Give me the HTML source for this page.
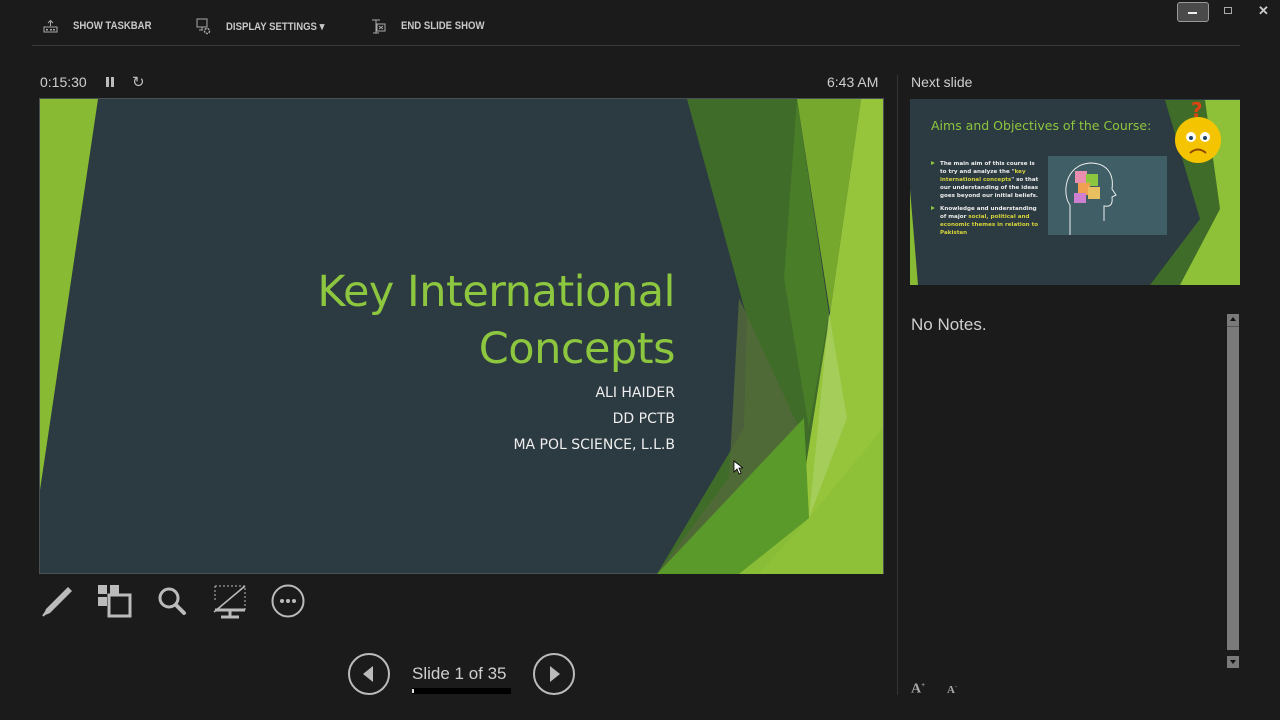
<!DOCTYPE html>
<html><head><style>
body{margin:0;width:1280px;height:720px;background:#1b1b1b;overflow:hidden;font-family:"Liberation Sans",sans-serif;position:relative;color:#ccc}
.a{position:absolute}
.tb{font-size:11px;font-weight:bold;color:#c8c8c8;top:20px;transform:scaleX(.87);transform-origin:left;white-space:nowrap}
</style></head><body>
<!-- top bar -->
<svg class="a" style="left:43px;top:19px" width="16" height="16" viewBox="0 0 16 16"><rect x="1" y="8" width="13" height="5" fill="none" stroke="#aaa"/><path d="M7.5 2v5M5 4l2.5-2.5L10 4" stroke="#aaa" fill="none"/><rect x="3" y="10" width="2" height="1.5" fill="#aaa"/><rect x="7" y="10" width="2" height="1.5" fill="#aaa"/><rect x="10" y="10" width="2" height="1.5" fill="#aaa"/></svg>
<div class="a tb" style="left:73px">SHOW TASKBAR</div>
<svg class="a" style="left:196px;top:18px" width="16" height="18" viewBox="0 0 16 18"><rect x="1" y="1" width="10" height="8" fill="none" stroke="#aaa"/><path d="M6 9v3M3 12h4" stroke="#aaa"/><circle cx="11" cy="13" r="2.5" fill="none" stroke="#aaa" stroke-width="1.5" stroke-dasharray="2 1"/></svg>
<div class="a tb" style="left:226px">DISPLAY SETTINGS ▾</div>
<svg class="a" style="left:371px;top:18px" width="16" height="18" viewBox="0 0 16 18"><path d="M1 2h8M5 2v13M2 15h6" stroke="#aaa" fill="none"/><rect x="6" y="6" width="8" height="7" fill="#1b1b1b" stroke="#aaa"/><path d="M8 8l4 3M12 8l-4 3" stroke="#aaa"/></svg>
<div class="a tb" style="left:401px">END SLIDE SHOW</div>
<div class="a" style="left:32px;top:45px;width:1208px;height:1px;background:#3a3a3a"></div>
<div class="a" style="left:1177px;top:2px;width:30px;height:18px;border:1px solid #999;border-radius:3px;background:#4a4a4a"></div>
<div class="a" style="left:1188px;top:12px;width:9px;height:1.5px;background:#eee"></div>
<div class="a" style="left:1224px;top:7px;width:6px;height:5px;border:1px solid #aaa"></div>
<div class="a" style="left:1258px;top:3px;font-size:13px;color:#ccc;font-weight:bold">✕</div>

<div class="a" style="left:40px;top:74px;font-size:14px;color:#cfcfcf">0:15:30</div>
<div class="a" style="left:106px;top:77px;width:3px;height:10px;background:#bbb;box-shadow:5px 0 0 #bbb"></div>
<div class="a" style="left:132px;top:73px;font-size:15px;color:#bbb">↻</div>
<div class="a" style="left:827px;top:74px;font-size:14px;color:#cfcfcf">6:43 AM</div>

<!-- slide -->
<svg class="a" style="left:39px;top:98px" width="845" height="476" viewBox="0 0 845 476">
<rect x="0" y="0" width="845" height="476" fill="#2c3a41" stroke="#666"/>
<polygon points="1,1 59,1 1,392" fill="#88bb33"/>
<polygon points="648,1 758,1 790,220 770,420 700,476 618,476 705,330 708,220" fill="#3f6c28"/>
<polygon points="700,200 760,330 740,476 618,476 690,380" fill="#546a3a" opacity=".8"/>
<polygon points="758,1 822,1 791,215" fill="#77a82e"/>
<polygon points="758,1 790,215 770,330 745,180" fill="#4a7d28"/>
<polygon points="822,1 844,1 844,476 720,476 765,380 791,215" fill="#96c43a"/>
<polygon points="790,215 808,320 770,420" fill="#a8cf62" opacity=".8"/>
<polygon points="618,476 765,320 770,420 720,476" fill="#5a9a2a"/>
<polygon points="700,476 770,420 844,330 844,476" fill="#8ec138" opacity=".9"/>
</svg>
<div class="a" style="left:200px;top:264px;width:475px;text-align:right;font-family:'DejaVu Sans',sans-serif;font-size:43px;line-height:57px;color:#8dc63f;letter-spacing:-0.5px">Key International<br>Concepts</div>
<div class="a" style="left:400px;top:380px;width:275px;text-align:right;font-family:'DejaVu Sans',sans-serif;font-size:14px;line-height:26px;color:#eee">ALI HAIDER<br>DD PCTB<br>MA POL SCIENCE, L.L.B</div>
<svg class="a" style="left:733px;top:460px" width="10" height="15"><path d="M1 1v11l3-3 2 5 2-1-2-5h4z" fill="#fff" stroke="#000" stroke-width=".8"/></svg>

<!-- tools -->
<svg class="a" style="left:40px;top:584px" width="280" height="36" viewBox="0 0 280 36">
<path d="M3 32l3-7L28 3l4 4L10 29z" fill="#bbb"/><path d="M3 32l3-4" stroke="#bbb" stroke-width="2"/>
<rect x="58" y="1" width="9" height="9" fill="#bbb"/><rect x="70" y="1" width="9" height="9" fill="#bbb"/><rect x="58" y="13" width="9" height="9" fill="#bbb"/><rect x="69" y="11" width="21" height="21" fill="none" stroke="#bbb" stroke-width="3"/>
<circle cx="129" cy="14" r="9" fill="none" stroke="#bbb" stroke-width="3"/><path d="M136 21l8 8" stroke="#bbb" stroke-width="4" stroke-linecap="round"/>
<path d="M175 2h30v24M175 2v16" stroke="#bbb" stroke-dasharray="2 2" fill="none"/><path d="M174 28L205 2" stroke="#bbb" stroke-width="1.5"/><path d="M175 26h30M190 26v6M181 33h18" stroke="#bbb" stroke-width="3"/>
<circle cx="248" cy="17" r="15.5" fill="none" stroke="#bbb" stroke-width="2"/><circle cx="242" cy="17" r="2" fill="#bbb"/><circle cx="248" cy="17" r="2" fill="#bbb"/><circle cx="254" cy="17" r="2" fill="#bbb"/>
</svg>
<svg class="a" style="left:347px;top:653px" width="230" height="44" viewBox="0 0 230 44">
<circle cx="22" cy="21" r="20" fill="none" stroke="#bbb" stroke-width="2"/><path d="M26 13v16l-10-8z" fill="#bbb"/>
<circle cx="207" cy="21" r="20" fill="none" stroke="#bbb" stroke-width="2"/><path d="M203 13v16l10-8z" fill="#bbb"/>
</svg>
<div class="a" style="left:412px;top:664px;font-size:17px;color:#cfcfcf">Slide 1 of 35</div>
<div class="a" style="left:412px;top:688px;width:99px;height:6px;background:#000"></div>
<div class="a" style="left:412px;top:689px;width:2px;height:4px;background:#ddd"></div>

<!-- right panel -->
<div class="a" style="left:897px;top:75px;width:1px;height:620px;background:#333"></div>
<div class="a" style="left:911px;top:74px;font-size:14px;color:#cfcfcf">Next slide</div>
<svg class="a" style="left:910px;top:99px" width="330" height="186" viewBox="0 0 330 186">
<rect width="330" height="186" fill="#2c3a41"/>
<polygon points="0,90 8,186 0,186" fill="#88bb33"/>
<polygon points="255,1 330,1 330,186 240,186 290,120" fill="#3f6c28"/>
<polygon points="295,1 330,1 330,186 270,186 310,110" fill="#8ec138"/>
<text x="21" y="31" font-family="DejaVu Sans" font-size="12.5" fill="#8dc63f">Aims and Objectives of the Course:</text>
<g font-family="DejaVu Sans" font-size="5.6" fill="#eee" font-weight="bold">
<text x="30" y="66">The main aim of this course is</text><text x="30" y="74">to try and analyze the "<tspan fill="#d6d43a">key</tspan></text><text x="30" y="82" fill="#d6d43a">international concepts<tspan fill="#eee">" so that</tspan></text><text x="30" y="90">our understanding of the ideas</text><text x="30" y="98">goes beyond our initial beliefs.</text>
<text x="30" y="111">Knowledge and understanding</text><text x="30" y="119">of major <tspan fill="#d6d43a">social, political and</tspan></text><text x="30" y="127" fill="#d6d43a">economic themes in relation to</text><text x="30" y="135" fill="#d6d43a">Pakistan</text></g>
<path d="M21 62l4 2-4 2zM21 107l4 2-4 2z" fill="#8dc63f"/>
<rect x="138" y="57" width="119" height="79" fill="#3f5e66"/>
<path d="M160 136v-30c-8-10-6-40 20-42c18 0 24 12 22 26l4 6-4 2c1 8-2 10-8 9v15" fill="none" stroke="#eee" stroke-width="1"/>
<rect x="165" y="72" width="12" height="12" fill="#e88fb0"/><rect x="176" y="75" width="12" height="12" fill="#8cc63f"/><rect x="168" y="84" width="12" height="12" fill="#f0a050"/><rect x="178" y="88" width="12" height="12" fill="#e8c060"/><rect x="164" y="94" width="12" height="10" fill="#d080d0"/>
<circle cx="288" cy="41" r="23" fill="#f5c400"/><circle cx="281" cy="38" r="5" fill="#fff"/><circle cx="295" cy="38" r="5" fill="#fff"/><circle cx="281" cy="39" r="2" fill="#246"/><circle cx="295" cy="39" r="2" fill="#246"/><path d="M280 54q8-7 16 0" fill="none" stroke="#8a4a00" stroke-width="2"/>
<text x="281" y="18" font-family="DejaVu Sans" font-weight="bold" font-size="20" fill="#d41">?</text>
</svg>
<div class="a" style="left:911px;top:315px;font-size:17px;color:#cfcfcf">No Notes.</div>
<div class="a" style="left:1227px;top:314px;width:12px;height:354px;background:#7a7a7a"></div>
<div class="a" style="left:1227px;top:326px;width:12px;height:1px;background:#555"></div>
<div class="a" style="left:1227px;top:650px;width:12px;height:6px;background:#1b1b1b"></div>
<div class="a" style="left:1230px;top:317px;border:3px solid transparent;border-bottom:4px solid #111;border-top:0"></div>
<div class="a" style="left:1230px;top:660px;border:3px solid transparent;border-top:4px solid #111;border-bottom:0"></div>
<div class="a" style="left:911px;top:681px;font-family:'Liberation Serif',serif;font-weight:bold;font-size:14px;color:#aaa">A<sup style="font-size:7px">+</sup></div>
<div class="a" style="left:947px;top:684px;font-family:'Liberation Serif',serif;font-weight:bold;font-size:11px;color:#aaa">A<sup style="font-size:6px">-</sup></div>
</body></html>
